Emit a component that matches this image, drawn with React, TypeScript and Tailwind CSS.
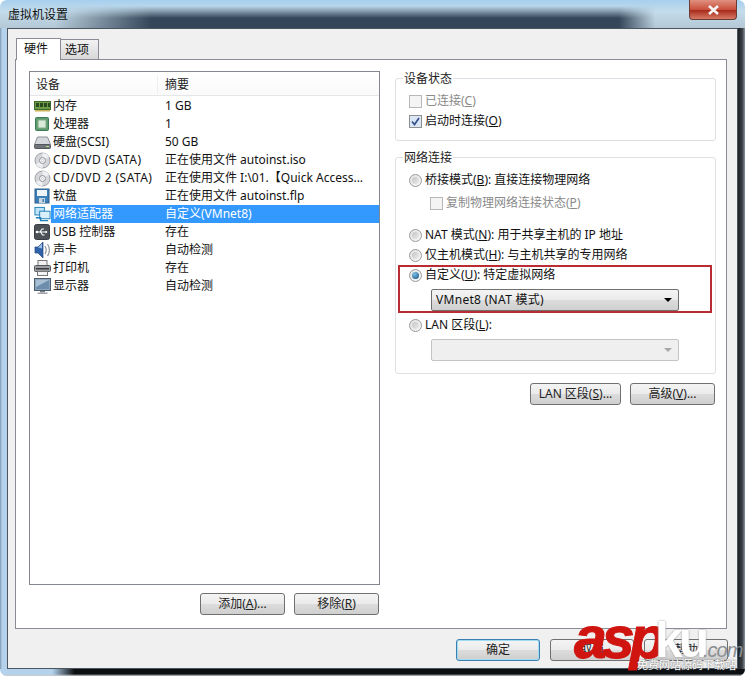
import type { ReactNode } from "react";

const FONT = "font-['Noto_Sans','Noto_Sans_CJK_SC',sans-serif]";

function RamIcon() {
  return (
    <svg width="17" height="12" viewBox="0 0 17 12">
      <rect x="0.5" y="1.5" width="16" height="8" fill="#6f9c48" stroke="#3d6a2a" />
      <rect x="2" y="3" width="3" height="4" fill="#2c4a20" />
      <rect x="6" y="3" width="3" height="4" fill="#2c4a20" />
      <rect x="10" y="3" width="3" height="4" fill="#2c4a20" />
      <rect x="14" y="3" width="2" height="4" fill="#2c4a20" />
      <path d="M1 10h15v1.5H1z" fill="#c9b45a" />
    </svg>
  );
}

function CpuIcon() {
  return (
    <svg width="16" height="16" viewBox="0 0 16 16">
      <rect x="1.5" y="1.5" width="13" height="13" rx="1" fill="#5d9a6c" stroke="#3d7a55" />
      <rect x="4" y="4" width="8" height="8" fill="#dbe9d8" stroke="#7fac88" />
    </svg>
  );
}

function HddIcon() {
  return (
    <svg width="17" height="16" viewBox="0 0 17 16">
      <path d="M3.5 3h10l3 7.5H.5z" fill="#d5d8dc" stroke="#8c9096" />
      <rect x="0.5" y="10.5" width="16" height="4" rx="1" fill="#6f747b" stroke="#54585e" />
      <rect x="12" y="12" width="3" height="1" fill="#b4e08a" />
    </svg>
  );
}

function CdIcon() {
  return (
    <svg width="17" height="17" viewBox="0 0 17 17">
      <circle cx="8.5" cy="8.5" r="7.5" fill="#d4d6d9" stroke="#9b9ea3" />
      <path d="M8.5 1a7.5 7.5 0 0 1 6.5 3.7L8.5 8.5z" fill="#eef0f2" />
      <path d="M8.5 16a7.5 7.5 0 0 1-6.5-3.7l6.5-3.8z" fill="#eef0f2" />
      <circle cx="8.5" cy="8.5" r="3" fill="#f6f6f6" stroke="#8f9297" />
      <circle cx="8.5" cy="8.5" r="1" fill="#fff" stroke="#a8abaf" strokeWidth="0.5" />
    </svg>
  );
}

function FloppyIcon() {
  return (
    <svg width="16" height="16" viewBox="0 0 16 16">
      <rect x="1" y="1" width="14" height="14" fill="#3f7fb8" stroke="#2b5f8c" strokeWidth="1" />
      <rect x="3" y="2" width="10" height="6" fill="#eef4fa" />
      <rect x="5" y="10" width="6" height="5" fill="#c9d6e2" />
      <rect x="8.5" y="11" width="1.5" height="3" fill="#3f7fb8" />
    </svg>
  );
}

function NetIcon() {
  return (
    <svg width="18" height="17" viewBox="0 0 18 17">
      <rect x="1" y="1" width="10" height="8" fill="#bfe3f7" stroke="#1f7fb8" />
      <rect x="6" y="5" width="11" height="8" fill="#d9effa" stroke="#1f7fb8" />
      <path d="M2 12h5v3h8" fill="none" stroke="#1f7fb8" strokeWidth="1.5" />
    </svg>
  );
}

function UsbIcon() {
  return (
    <svg width="16" height="16" viewBox="0 0 16 16">
      <rect x="0.5" y="0.5" width="15" height="15" rx="2" fill="#4c5157" stroke="#3a3e43" />
      <path d="M3 8h10M6 8l2-3h2M6.5 8l2 3h2" fill="none" stroke="#fff" strokeWidth="1.1" />
      <path d="M13.5 8l-2-1.5v3z" fill="#fff" />
      <circle cx="3" cy="8" r="1.3" fill="#fff" />
    </svg>
  );
}

function SpeakerIcon() {
  return (
    <svg width="17" height="18" viewBox="0 0 17 18">
      <path d="M1 6h3l5-5v16l-5-5H1z" fill="#2f62a8" stroke="#27487c" strokeWidth="0.7" />
      <path d="M4 6.5l4-4v5z" fill="#9dc0ea" />
      <path d="M11 5c1.5 2.500 1.500 5.500 0 8M13.500 3c2.500 3.500 2.500 8.500 0 12" fill="none" stroke="#8c939c" strokeWidth="1.2" />
    </svg>
  );
}

function PrinterIcon() {
  return (
    <svg width="17" height="16" viewBox="0 0 17 16">
      <rect x="4" y="0.5" width="9" height="6" fill="#f2f2f2" stroke="#777" />
      <rect x="0.5" y="5.5" width="16" height="6" rx="1" fill="#9a9da1" stroke="#55585c" />
      <rect x="2" y="8" width="13" height="1.500" fill="#3b3d40" />
      <rect x="3.500" y="11.500" width="10" height="4" fill="#f4f4f4" stroke="#777" />
    </svg>
  );
}

function MonitorIcon() {
  return (
    <svg width="17" height="17" viewBox="0 0 17 17">
      <rect x="0.5" y="0.5" width="16" height="12" fill="#8ea6bd" stroke="#4d5c6b" />
      <rect x="2" y="2" width="13" height="9" fill="#6d8dad" />
      <path d="M2 2h13L2 9z" fill="#a9bfd4" />
      <rect x="6" y="13" width="5" height="1.500" fill="#7b8087" />
      <rect x="3.500" y="14.500" width="10" height="1.500" fill="#a3a7ac" />
    </svg>
  );
}

const DEVICES: { icon: ReactNode; name: string; summary: string; selected?: boolean; wide?: boolean }[] = [
  { icon: <RamIcon />, name: "内存", summary: "1 GB" },
  { icon: <CpuIcon />, name: "处理器", summary: "1" },
  { icon: <HddIcon />, name: "硬盘(SCSI)", summary: "50 GB" },
  { icon: <CdIcon />, name: "CD/DVD (SATA)", summary: "正在使用文件 autoinst.iso", wide: true },
  { icon: <CdIcon />, name: "CD/DVD 2 (SATA)", summary: "正在使用文件 I:\\01.【Quick Access...", wide: true },
  { icon: <FloppyIcon />, name: "软盘", summary: "正在使用文件 autoinst.flp" },
  { icon: <NetIcon />, name: "网络适配器", summary: "自定义(VMnet8)", selected: true },
  { icon: <UsbIcon />, name: "USB 控制器", summary: "存在" },
  { icon: <SpeakerIcon />, name: "声卡", summary: "自动检测" },
  { icon: <PrinterIcon />, name: "打印机", summary: "存在" },
  { icon: <MonitorIcon />, name: "显示器", summary: "自动检测" },
];

function Button({ children, width, primary }: { children: ReactNode; width: string; primary?: boolean }) {
  return (
    <div
      className={`${width} h-[22px] flex items-center justify-center rounded-[3px] border text-[12px] text-[#222] bg-[linear-gradient(#f4f4f4,#ebebeb_48%,#dcdcdc_52%,#cfcfcf)] ${
        primary ? "border-[#3c7fb1] shadow-[inset_0_0_0_1px_#9fdcf3]" : "border-[#707070]"
      }`}
    >
      <span>{children}</span>
    </div>
  );
}

function Radio({ checked }: { checked?: boolean }) {
  return (
    <span className="w-[13px] h-[13px] shrink-0 rounded-full border border-[#9a9a9a] bg-[linear-gradient(135deg,#e2e2e2,#f8f8f8)] flex items-center justify-center">
      <span
        className={
          checked
            ? "w-[7px] h-[7px] rounded-full bg-[radial-gradient(circle_at_35%_30%,#7fc0e8,#0f4f7f)]"
            : "w-[7px] h-[7px] rounded-full bg-[linear-gradient(135deg,#c4c4c4,#ececec)]"
        }
      />
    </span>
  );
}

function Check({ checked }: { checked?: boolean }) {
  return (
    <span
      className={`w-[13px] h-[13px] shrink-0 border flex items-center justify-center ${
        checked ? "border-[#8e8f8f] bg-[#dbe6f4]" : "border-[#b8b8b8] bg-[#f4f4f4]"
      }`}
    >
      {checked && (
        <svg width="9" height="9" viewBox="0 0 9 9">
          <path d="M1 4.500l2.500 3L8 1" fill="none" stroke="#36508c" strokeWidth="1.700" />
        </svg>
      )}
    </span>
  );
}

function Row({ className, mark, children }: { className?: string; mark: ReactNode; children: ReactNode }) {
  return (
    <div className={`h-[18px] flex items-center gap-[3px] text-[12px] whitespace-nowrap ${className ?? ""}`}>
      {mark}
      <span>{children}</span>
    </div>
  );
}

function Select({ disabled }: { disabled?: boolean }) {
  return (
    <div
      className={`ml-[35px] w-[248px] h-[22px] rounded-[2px] border flex items-center justify-between pl-[4px] pr-[6px] text-[12px] ${
        disabled
          ? "border-[#c4c4c4] bg-[#efefef]"
          : "border-[#707070] text-[#111] bg-[linear-gradient(#f4f4f4,#ebebeb_48%,#dcdcdc_52%,#cfcfcf)]"
      }`}
    >
      <span className="tracking-[0.3px]">{disabled ? "" : "VMnet8 (NAT 模式)"}</span>
      <span className={`w-0 h-0 border-x-[4px] border-x-transparent border-t-[4px] ${disabled ? "border-t-[#a8a8a8]" : "border-t-black"}`} />
    </div>
  );
}

function Group({ title, className, children }: { title: string; className: string; children: ReactNode }) {
  return (
    <div className={`border border-[#dcdfe3] rounded-[3px] pl-[13px] ${className}`}>
      <div className="-mt-[8px] -ml-[6px] w-fit px-[1px] h-[16px] leading-[16px] bg-white text-[12px] text-[#222]">{title}</div>
      {children}
    </div>
  );
}

export default function App() {
  return (
    <div className={`relative w-[745px] h-[676px] overflow-hidden flex flex-col rounded-[7px] bg-white ${FONT}`}>
      {/* window frame */}
      <div className="h-[28px] shrink-0 relative flex bg-[linear-gradient(#a6cfef,#c4dceb_40%,#b4c8d6)]">
        <div className="absolute left-[55px] right-[90px] top-[6px] bottom-0 bg-[linear-gradient(90deg,transparent,#34465a_16%,#34465a_94%,transparent)] [mask-image:linear-gradient(transparent,black_55%)]" />
        <div className="relative pl-[8px] pt-[7px] text-[12px] leading-[16px] text-[#111]">虚拟机设置</div>
        <div className="absolute right-[8px] top-0 w-[48px] h-[20px] rounded-b-[4px] border border-t-0 border-[#6b3b35] flex items-center justify-center bg-[linear-gradient(#e09080,#c9503c_50%,#a92c1c_55%,#d67a66)]">
          <svg width="13" height="10" viewBox="0 0 13 10">
            <path d="M2 1l9 8M11 1L2 9" stroke="#f4f4f4" strokeWidth="2.600" />
          </svg>
        </div>
      </div>

      <div className="flex-1 flex min-h-0">
        <div className="w-[7px] shrink-0 bg-[linear-gradient(90deg,#7f97ad,#b4d2ec_30%,#b4d2ec)]" />
        <div className="flex-1 flex flex-col min-w-0 bg-[#f0f0f0] border border-[#4a5560] px-[7px] pt-[8px]">
          {/* tabs */}
          <div className="flex h-[22px] items-end pl-[1px] text-[12px]">
            <div className="relative z-10 w-[45px] h-[22px] -mb-[1px] pl-[7px] pt-[1px] bg-white border border-b-0 border-[#898c95] text-[#111]">硬件</div>
            <div className="w-[38px] h-[20px] pl-[4px] pt-[1px] border border-l-0 border-b-0 border-[#898c95] bg-[linear-gradient(#f2f2f2,#d8d8d8)] text-[#111]">选项</div>
          </div>

          {/* tab panel */}
          <div className="w-[712px] h-[570px] bg-white border border-[#898c95] flex pl-[13px] pt-[11px] gap-[15px]">
            <div className="w-[351px] shrink-0 flex flex-col">
              <div className="h-[514px] border border-[#828790] bg-white">
                <div className="h-[24px] pt-[3px] flex items-center text-[12px] text-[#222] border-b border-[#e4e6e8] bg-[linear-gradient(#fff,#fafafa)]">
                  <span className="pl-[6px] w-[128px] border-r border-[#eceef0]">设备</span>
                  <span className="pl-[7px]">摘要</span>
                </div>
                <div className="mt-[1px]">
                  {DEVICES.map((d) => (
                    <div key={d.name + d.summary} className="h-[18px] flex items-center text-[12px] text-[#111] whitespace-nowrap">
                      <span className="w-[21px] shrink-0 pl-[4px] flex items-center">{d.icon}</span>
                      <div className={`flex-1 h-[18px] flex items-center ${d.selected ? "bg-[#3399ff] text-white" : ""}`}>
                        <span className={`w-[114px] shrink-0 pl-[2px] ${d.wide ? "tracking-[0.45px]" : ""}`}>{d.name}</span>
                        <span>{d.summary}</span>
                      </div>
                    </div>
                  ))}
                </div>
              </div>
              <div className="mt-[8px] flex justify-end gap-[9px] pr-[1px]">
                <Button width="w-[85px]">
                  添加(<u>A</u>)...
                </Button>
                <Button width="w-[85px]">
                  移除(<u>R</u>)
                </Button>
              </div>
            </div>

            <div className="w-[321px] shrink-0 pt-[7px]">
              <Group title="设备状态" className="h-[63px]">
                <Row className="mt-[5px] text-[#8a8a8a]" mark={<Check />}>
                  已连接(<u>C</u>)
                </Row>
                <Row className="mt-[2px] text-[#111]" mark={<Check checked />}>
                  启动时连接(<u>O</u>)
                </Row>
              </Group>

              <Group title="网络连接" className="h-[217px] mt-[16px]">
                <Row className="mt-[5px] text-[#111]" mark={<Radio />}>
                  桥接模式(<u>B</u>): 直接连接物理网络
                </Row>
                <Row className="mt-[5px] ml-[21px] text-[#8a8a8a]" mark={<Check />}>
                  复制物理网络连接状态(<u>P</u>)
                </Row>
                <Row className="mt-[14px] text-[#111]" mark={<Radio />}>
                  NAT 模式(<u>N</u>): 用于共享主机的 IP 地址
                </Row>
                <Row className="mt-[2px] text-[#111]" mark={<Radio />}>
                  仅主机模式(<u>H</u>): 与主机共享的专用网络
                </Row>
                <Row className="mt-[2px] text-[#111]" mark={<Radio checked />}>
                  自定义(<u>U</u>): 特定虚拟网络
                </Row>
                <div className="-ml-[13px] mt-[5px]">
                  <Select />
                </div>
                <Row className="mt-[5px] text-[#111]" mark={<Radio />}>
                  LAN 区段(<u>L</u>):
                </Row>
                <div className="-ml-[13px] mt-[5px]">
                  <Select disabled />
                </div>
              </Group>

              <div className="mt-[9px] flex justify-end gap-[9px] pr-[1px]">
                <Button width="w-[91px]">
                  LAN 区段(<u>S</u>)...
                </Button>
                <Button width="w-[85px]">
                  高级(<u>V</u>)...
                </Button>
              </div>
            </div>
          </div>

          {/* dialog buttons */}
          <div className="mt-[10px] flex justify-end gap-[10px] pr-[2px]">
            <Button width="w-[84px]" primary>确定</Button>
            <Button width="w-[84px]">取消</Button>
            <Button width="w-[84px]">帮助</Button>
          </div>
        </div>
        <div className="w-[7px] shrink-0 bg-[linear-gradient(90deg,#1b2024,#3a4046_60%,#8b949b)]" />
      </div>
      <div className="h-[7px] shrink-0 bg-[linear-gradient(transparent_70%,#c8ccd0),linear-gradient(90deg,#b4d2ec_0%,#b4d2ec_7%,#0c0f12_10%,#0c0f12_100%)]" />

      {/* annotation */}
      <div className="absolute left-[398px] top-[265px] w-[314px] h-[48px] border-2 border-[#bb2b33]" />

      {/* watermark */}
      <div className="absolute left-[574px] top-[609px] h-[67px] w-[171px] pointer-events-none font-['Liberation_Sans',sans-serif]">
        <span className="absolute left-0 top-[-4px] text-[59px] leading-[66px] font-bold italic tracking-[-5px] text-[#d0140f] [-webkit-text-stroke:1px_#d0140f]">asp</span>
        <span className="absolute left-[81px] top-[-2px] text-[50px] leading-[66px] font-bold text-white tracking-[-4px] [text-shadow:0_0_2px_#8a8a8a]">ku</span>
        <span className="absolute left-[129px] top-[26px] text-[20px] leading-[30px] italic tracking-[-1px] text-[#8b8f92]">.com</span>
        <span className={`absolute left-[63px] top-[49px] text-[11px] leading-[13px] whitespace-nowrap text-white [text-shadow:0_0_2px_#444] ${FONT}`}>免费网站源码下载站</span>
      </div>
    </div>
  );
}
